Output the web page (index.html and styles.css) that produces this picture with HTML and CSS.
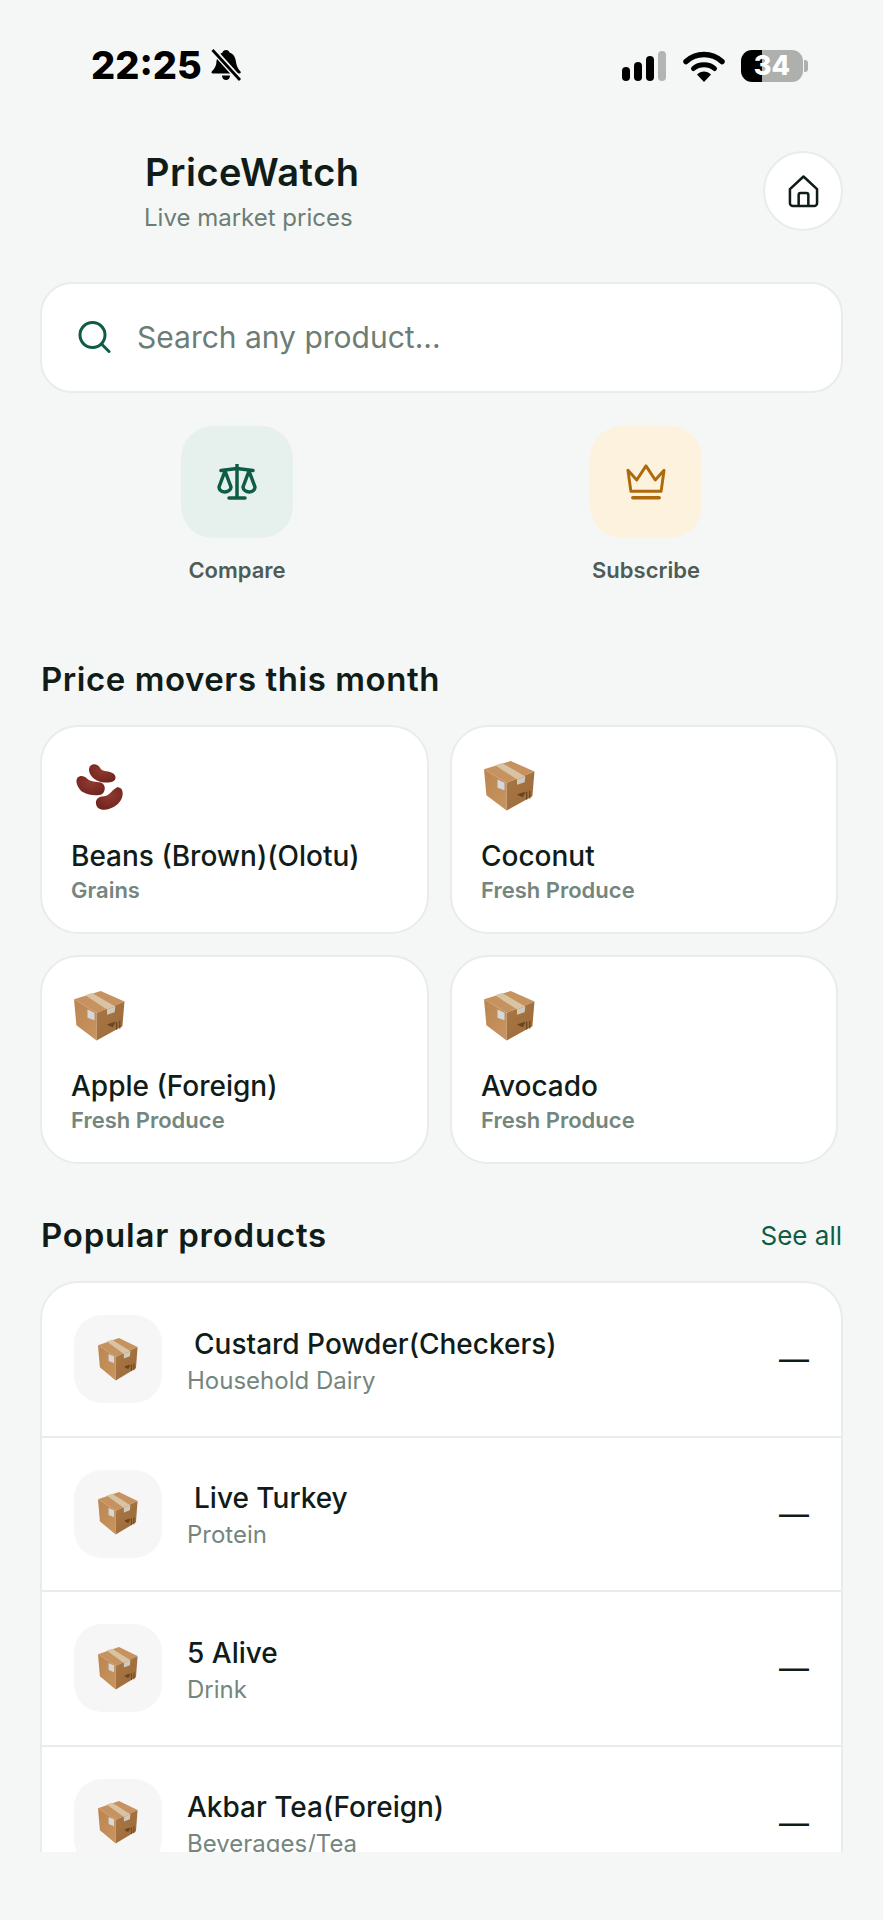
FILE: index.html
```html
<!DOCTYPE html>
<html lang="en">
<head>
    <meta charset="UTF-8">
    <meta name="viewport" content="width=device-width, initial-scale=1.0">
    <title>PriceWatch</title>
    <link rel="stylesheet" href="styles.css">
</head>
<body>
<svg class="defs" width="0" height="0" aria-hidden="true">
    <defs>
        <linearGradient id="boxLeft" x1="0" y1="0" x2="1" y2="1">
            <stop offset="0" stop-color="#bb8550"/>
            <stop offset="1" stop-color="#c8945f"/>
        </linearGradient>
        <linearGradient id="boxRight" x1="0" y1="0" x2="1" y2="1">
            <stop offset="0" stop-color="#a97743"/>
            <stop offset="1" stop-color="#9a6a39"/>
        </linearGradient>
        <radialGradient id="beanFill" cx="0.5" cy="0.35" r="0.7">
            <stop offset="0" stop-color="#8f3a30"/>
            <stop offset="1" stop-color="#6f231d"/>
        </radialGradient>
    </defs>
    <symbol id="box" viewBox="0 0 49 52" preserveAspectRatio="none">
        <polygon points="25.700,0 48.500,11 21.700,22.700 0,8.700" fill="#c69360"/>
        <polygon points="0,8.700 21.700,22.700 21.700,51.500 2.300,35.500" fill="url(#boxLeft)"/>
        <polygon points="21.700,22.700 48.500,11 46.500,36.700 21.700,51.500" fill="url(#boxRight)"/>
        <polygon points="10.700,4.300 17.300,2 39.700,16 31.700,19.300" fill="#d9c3a3"/>
        <polygon points="31.700,19.300 39.700,16 39,22 31.700,24.800" fill="#cfcabf"/>
        <polygon points="13,19.300 19.700,22.500 19.700,30.500 13,27.700" fill="#d5d8da"/>
        <path d="M33 35l4 2 2-4-4 1zM41 32v8M44 31v8" stroke="#6b4522" stroke-width="1.200" fill="#6b4522"/>
    </symbol>
    <symbol id="beans" viewBox="0 0 49 51">
        <path fill="url(#beanFill)" d="M15 5C18 2 23 3 25 7C27 11 32 10 37 12C42 14 42 19 38 21C33 23 24 22 19 18C15 15 12 9 15 5z"/>
        <path fill="url(#beanFill)" d="M2 17C5 14 9 15 12 18C15 21 21 21 26 22C31 24 31 31 27 34C22 36 13 35 8 32C3 29-1 21 2 17z"/>
        <path fill="url(#beanFill)" d="M42 27C46 26 49 30 48 35C47 42 41 47 34 49C28 51 22 49 21 44C20 39 24 36 29 36C34 36 37 30 42 27z"/>
    </symbol>
</svg>

<div class="page">
    <div class="status-bar">
        <div class="status-left">
            <span class="time">22:25</span>
            <svg class="bell" viewBox="0 0 32 32">
                <path d="M16 1c2 0 3 1 3.500 2.500C24 5 25.500 9 26 13c.5 4 2 7 4.500 9.500.5 1 .2 2-1 2H3c-1.500 0-2-1-1-2.200C5 19.500 6.500 16 6.500 12 7 8 9 5 12.500 3.500 13 2 14 1 16 1z"/>
                <path d="M12 26.500h8c0 3-2 4.500-4 4.500s-4-1.500-4-4.500z"/>
                <path d="M3 1l27 30" stroke="#f5f7f6" stroke-width="6"/>
                <path d="M2.500 1L30 31" stroke="#000" stroke-width="2.800"/>
            </svg>
        </div>
        <div class="status-right">
            <div class="signal">
                <span class="bar bar-1"></span>
                <span class="bar bar-2"></span>
                <span class="bar bar-3"></span>
                <span class="bar bar-4"></span>
            </div>
            <svg class="wifi" viewBox="0 0 42 32">
                <path d="M3 11.500C13 2 29 2 39 11.500" fill="none" stroke="#000" stroke-width="5.500" stroke-linecap="round"/>
                <path d="M10.500 18.500C16 13.500 26 13.500 31.500 18.500" fill="none" stroke="#000" stroke-width="5" stroke-linecap="round"/>
                <path d="M14 24.500C18 20.500 24 20.500 28 24.500L21 32z"/>
            </svg>
            <div class="battery">
                <div class="battery-body"><span class="battery-level">34</span></div>
                <span class="battery-tip"></span>
            </div>
        </div>
    </div>

    <div class="content">
        <div class="header">
            <div class="brand">
                <h1>PriceWatch</h1>
                <p>Live market prices</p>
            </div>
            <div class="home-btn">
                <svg viewBox="0 0 32 34" fill="none" stroke="#101c18" stroke-width="2.600" stroke-linejoin="round">
                    <path d="M2 14.500L16 1.500l14 13V29a3 3 0 0 1-3 3H5a3 3 0 0 1-3-3z"/>
                    <path d="M11 32V20.500a2 2 0 0 1 2-2h6a2 2 0 0 1 2 2V32"/>
                </svg>
            </div>
        </div>

        <div class="search">
            <svg viewBox="0 0 33 32" fill="none" stroke="#0f5c46" stroke-width="3" stroke-linecap="round">
                <circle cx="14.500" cy="14" r="12.500"/>
                <path d="M24 23.500l7 7"/>
            </svg>
            <span>Search any product...</span>
        </div>

        <div class="actions">
            <div class="action">
                <div class="action-tile tile-green">
                    <svg viewBox="0 0 40 36" fill="none" stroke="#0f5c46" stroke-width="3.500" stroke-linecap="round" stroke-linejoin="round">
                        <path d="M20 1v33M12 34h16M4 6.500l16-2 16 2"/>
                        <path d="M8 7L2 23c0 6.500 11.500 6.500 12 0z"/>
                        <path d="M32 7l-6 16c.5 6.500 12 6.500 12 0z"/>
                    </svg>
                </div>
                <span>Compare</span>
            </div>
            <div class="action">
                <div class="action-tile tile-amber">
                    <svg viewBox="0 0 41 36" fill="none" stroke="#ad6a0c" stroke-width="3" stroke-linejoin="round" stroke-linecap="round">
                        <path d="M2 6l9 10 9.500-14.500L30 16l9-10-3 21.500H5z"/>
                        <path d="M7 34.200h27" stroke-width="3.600"/>
                    </svg>
                </div>
                <span>Subscribe</span>
            </div>
        </div>

        <h2 class="section-title movers-title">Price movers this month</h2>
        <div class="movers">
            <div class="mover-card">
                <svg class="emoji"><use href="#beans"/></svg>
                <div class="mover-name">Beans (Brown)(Olotu)</div>
                <div class="mover-cat">Grains</div>
            </div>
            <div class="mover-card">
                <svg class="emoji"><use href="#box"/></svg>
                <div class="mover-name">Coconut</div>
                <div class="mover-cat">Fresh Produce</div>
            </div>
            <div class="mover-card">
                <svg class="emoji"><use href="#box"/></svg>
                <div class="mover-name">Apple (Foreign)</div>
                <div class="mover-cat">Fresh Produce</div>
            </div>
            <div class="mover-card">
                <svg class="emoji"><use href="#box"/></svg>
                <div class="mover-name">Avocado</div>
                <div class="mover-cat">Fresh Produce</div>
            </div>
        </div>

        <div class="popular-head">
            <h2 class="section-title popular-title">Popular products</h2>
            <span class="see-all">See all</span>
        </div>
        <div class="product-list">
            <div class="product">
                <div class="product-thumb"><svg><use href="#box"/></svg></div>
                <div class="product-text">
                    <div class="product-name indent">Custard Powder(Checkers)</div>
                    <div class="product-cat">Household Dairy</div>
                </div>
                <span class="product-price">—</span>
            </div>
            <div class="product">
                <div class="product-thumb"><svg><use href="#box"/></svg></div>
                <div class="product-text">
                    <div class="product-name indent">Live Turkey</div>
                    <div class="product-cat">Protein</div>
                </div>
                <span class="product-price">—</span>
            </div>
            <div class="product">
                <div class="product-thumb"><svg><use href="#box"/></svg></div>
                <div class="product-text">
                    <div class="product-name">5 Alive</div>
                    <div class="product-cat">Drink</div>
                </div>
                <span class="product-price">—</span>
            </div>
            <div class="product">
                <div class="product-thumb"><svg><use href="#box"/></svg></div>
                <div class="product-text">
                    <div class="product-name">Akbar Tea(Foreign)</div>
                    <div class="product-cat">Beverages/Tea</div>
                </div>
                <span class="product-price">—</span>
            </div>
        </div>
    </div>
</div>
</body>
</html>
```

FILE: styles.css
```css
* {
    box-sizing: border-box;
}
body {
    font-family: Inter, "Liberation Sans", sans-serif;
    margin: 0;
    padding: 0;
    width: 883px;
    height: 1920px;
    overflow: hidden;
    background-color: #f5f7f6;
    color: #101c18;
}
.defs {
    display: block;
    height: 0;
}
.page {
    height: 1852px;
    overflow: hidden;
}

/* status bar */
.status-bar {
    height: 151px;
    padding: 45px 75px 0 91px;
    display: flex;
    justify-content: space-between;
    align-items: flex-start;
}
.status-left {
    display: flex;
    align-items: center;
    gap: 8px;
}
.time {
    font-size: 38px;
    line-height: 40px;
    font-weight: 800;
    color: #000;
}
.bell {
    width: 32px;
    height: 32px;
}
.status-right {
    display: flex;
    align-items: center;
    gap: 16px;
    margin-top: 5px;
}
.signal {
    display: flex;
    align-items: flex-end;
    gap: 4px;
    height: 30px;
    margin-right: 1px;
}
.bar {
    width: 8px;
    background: #000;
    border-radius: 4px;
}
.bar-1 { height: 14px; }
.bar-2 { height: 19px; }
.bar-3 { height: 25px; }
.bar-4 { height: 30px; background: #b3b5b4; }
.wifi {
    width: 42px;
    height: 32px;
}
.battery {
    display: flex;
    align-items: center;
    gap: 1px;
}
.battery-body {
    width: 62px;
    height: 32px;
    border-radius: 11px;
    background: linear-gradient(to right, #000 0 34%, #aeb0ae 34% 100%);
    display: flex;
    align-items: center;
    justify-content: center;
}
.battery-level {
    color: #fff;
    font-size: 27px;
    font-weight: 800;
    line-height: 32px;
}
.battery-tip {
    width: 4px;
    height: 12px;
    background: #aeb0ae;
    border-radius: 0 3px 3px 0;
}

/* main column */
.content {
    padding: 0 40px;
}
.header {
    display: flex;
    justify-content: space-between;
    align-items: flex-start;
}
.brand {
    padding-left: 105px;
}
.brand h1 {
    margin: 0;
    font-size: 38px;
    line-height: 42px;
    font-weight: 600;
    letter-spacing: 0.5px;
}
.brand p {
    margin: 12px 0 0 -1px;
    font-size: 24px;
    line-height: 26px;
    color: #6b7d75;
}
.home-btn {
    width: 80px;
    height: 80px;
    border-radius: 50%;
    background: #fff;
    border: 2px solid #e8ecea;
    display: flex;
    align-items: center;
    justify-content: center;
}
.home-btn svg {
    width: 31px;
    height: 33px;
}
.search {
    margin-top: 51px;
    height: 111px;
    background: #fff;
    border: 2px solid #e8ecea;
    border-radius: 32px;
    padding: 0 0 2px 36px;
    display: flex;
    align-items: center;
    gap: 26px;
    font-size: 30px;
    color: #6b7d75;
}
.search svg {
    width: 33px;
    height: 32px;
}
.actions {
    margin-top: 33px;
    display: grid;
    grid-template-columns: 394px 394px;
    gap: 15px;
}
.action {
    display: flex;
    flex-direction: column;
    align-items: center;
    font-size: 22px;
    line-height: 28px;
    font-weight: 600;
    color: #4e5c56;
}
.action-tile {
    width: 112px;
    height: 112px;
    border-radius: 32px;
    margin-bottom: 18px;
    display: flex;
    align-items: center;
    justify-content: center;
}
.action-tile svg {
    width: 40px;
    height: 36px;
}
.tile-green {
    background: #e6f1ed;
}
.tile-amber {
    background: #fdf2de;
}
.section-title {
    margin: 0 0 0 1px;
    font-size: 33px;
    line-height: 40px;
    font-weight: 600;
    letter-spacing: 0.55px;
}
.movers-title {
    margin-top: 75px;
}
.popular-title {
    letter-spacing: 0.78px;
}
.movers {
    margin-top: 26px;
    display: grid;
    grid-template-columns: 389px 388px;
    gap: 21px;
}
.mover-card {
    background: #fff;
    border: 2px solid #e8ecea;
    border-radius: 38px;
    padding: 34px 28px 28px 29px;
}
.emoji {
    display: block;
    width: 51px;
    height: 50px;
    margin-left: 3px;
}
.mover-name {
    margin-top: 27px;
    font-size: 28px;
    line-height: 36px;
    font-weight: 500;
}
.mover-cat {
    margin-top: 2px;
    font-size: 22px;
    line-height: 28px;
    font-weight: 600;
    color: #74867e;
}
.popular-head {
    margin-top: 51px;
    display: flex;
    justify-content: space-between;
    align-items: center;
}
.see-all {
    font-size: 26px;
    margin-right: 1px;
    color: #0f5c46;
}
.product-list {
    margin-top: 26px;
    background: #fff;
    border: 2px solid #e8ecea;
    border-radius: 38px;
}
.product {
    height: 154.500px;
    padding: 0 32px;
    display: flex;
    align-items: center;
    border-bottom: 2px solid #e8ecea;
}
.product-thumb {
    width: 88px;
    height: 88px;
    border-radius: 28px;
    background: #f5f6f5;
    display: flex;
    align-items: center;
    justify-content: center;
    flex-shrink: 0;
}
.product-thumb svg {
    width: 40px;
    height: 43px;
}
.product-text {
    flex: 1;
    margin-left: 25px;
    padding-top: 4px;
}
.product-name {
    font-size: 28px;
    line-height: 36px;
    font-weight: 500;
}
.indent {
    padding-left: 7px;
}
.product-cat {
    margin-top: 3px;
    font-size: 24px;
    line-height: 32px;
    color: #74867e;
}
.product-price {
    font-size: 30px;
    color: #101c18;
    line-height: 36px;
}
```
